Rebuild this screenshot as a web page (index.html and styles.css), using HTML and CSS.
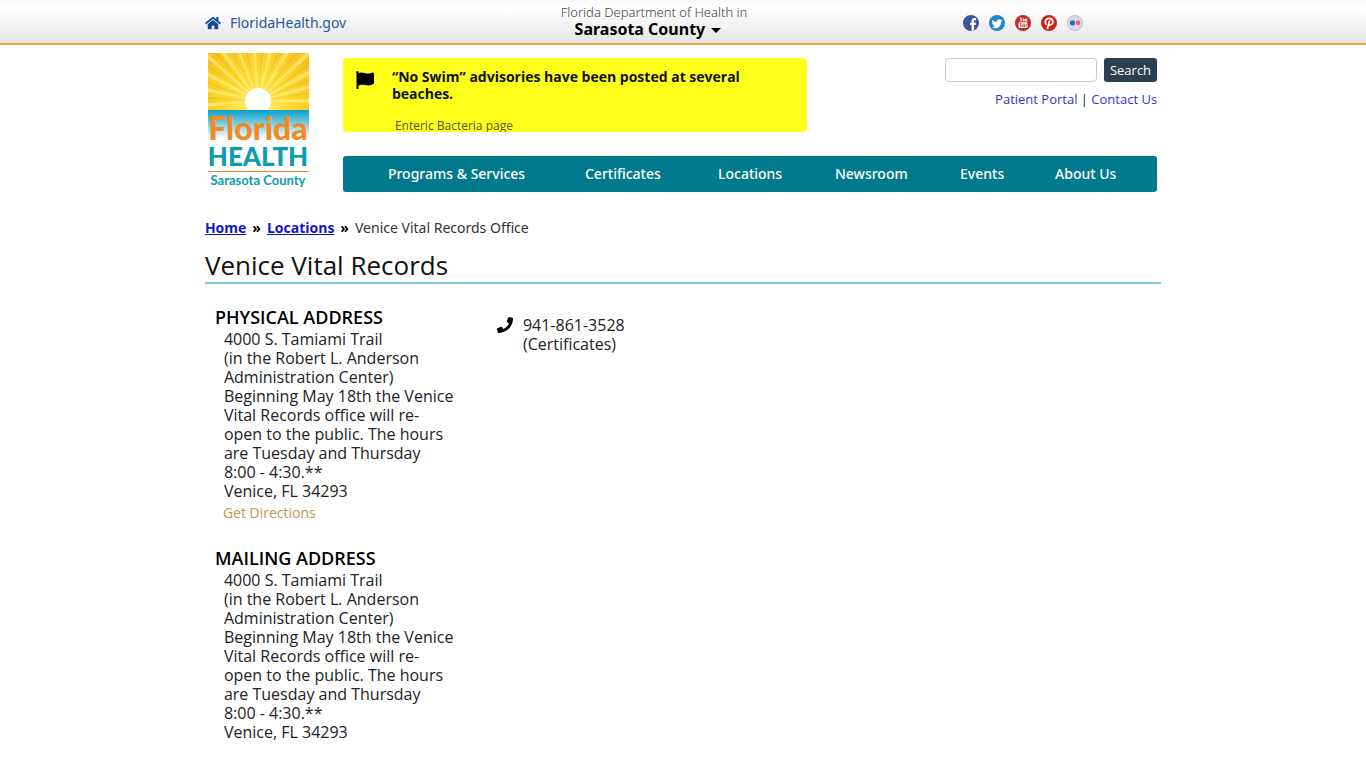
FILE: index.html
```
<!DOCTYPE html>
<html lang="en">
<head>
	<meta charset="UTF-8">
	<meta name="viewport" content="width=device-width, initial-scale=1">
	<title>Venice Vital Records Office | Florida Department of Health in Sarasota County</title>
	<link rel="stylesheet" href="styles.css">
</head>
<body>
	<div id="topbar">
		<div class="wrap topbar-in">
			<a class="home" href="#">
				<svg width="16" height="14" viewBox="0 0 576 512"><path fill="#164a91" d="M280 148L96 300v164a16 16 0 0 0 16 16h112a16 16 0 0 0 16-16v-96a16 16 0 0 1 16-16h64a16 16 0 0 1 16 16v96a16 16 0 0 0 16 16h112a16 16 0 0 0 16-16V300L296 148a12 12 0 0 0-16 0zM572 251l-84-69V44a12 12 0 0 0-12-12h-56a12 12 0 0 0-12 12v72l-90-74a48 48 0 0 0-61 0L4 251a12 12 0 0 0-1 17l25 31a12 12 0 0 0 17 2L280 107a12 12 0 0 1 16 0l235 194a12 12 0 0 0 17-2l25-31a12 12 0 0 0-1-17z"/></svg>
				<span>FloridaHealth.gov</span>
			</a>
			<a class="county" href="#">
				<span class="dept">Florida Department of Health in</span>
				<strong>Sarasota County <i class="caret"></i></strong>
			</a>
			<div class="social">
				<a href="#" aria-label="Facebook">
					<svg width="16" height="16" viewBox="0 0 16 16"><circle cx="8" cy="8" r="8" fill="#3c55a0"/><path fill="#fff" d="M8.600 16V10H7V7.700h1.600V6.200c0-2.100 1-3.100 3-3.100h1.500v2.200H12c-.8 0-1 .4-1 1.100v1.300h2.100l-.3 2.300H11v5.500z"/></svg>
				</a>
				<a href="#" aria-label="Twitter">
					<svg width="16" height="16" viewBox="0 0 16 16"><circle cx="8" cy="8" r="8" fill="#2284cc"/><path fill="#fff" d="M13.500 5.200l-1.200.4c.4-.3.700-.6.9-1.100l-1.400.5a2.300 2.300 0 0 0-3.900 2C6 6.900 4.400 6 3.300 4.700c-.7 1.100-.3 2.400.7 3.100l-1-.3c0 1.100.8 2 1.800 2.300h-1c.3.900 1.100 1.500 2.100 1.600-1 .7-2 1-3.300.9 4.500 2.600 9.800-.3 9.700-5.900z"/></svg>
				</a>
				<a href="#" aria-label="YouTube">
					<svg width="16" height="16" viewBox="0 0 16 16"><circle cx="8" cy="8" r="8" fill="#c5281c"/><path stroke="#fff" fill="none" d="M5 2.500l1.100 2v2M7.200 2.500l-1.100 2M8.200 4h.9v2h-.9zM10.500 3.500v2.700h1.200V3.500"/><rect x="3.500" y="7.300" width="9" height="5.700" rx="1.300" fill="#fff"/><path stroke="#c5281c" stroke-width=".7" fill="none" d="M4.500 8.500h2M5.500 8.500v3.300M7 9.500v2h1v-2M9 8.200v3.300h1V9.800H9M12 10.700h-1V9.800h1"/></svg>
				</a>
				<a href="#" aria-label="Pinterest">
					<svg width="16" height="16" viewBox="0 0 16 16"><circle cx="8" cy="8" r="8" fill="#c92619"/><path fill="none" stroke="#fff" stroke-width="1.700" stroke-linecap="round" d="M4.900 9C3.300 6.400 5 3.300 8.300 3.300c4.700 0 4.500 6.600 1 6.600-1 0-1.500-.5-1.600-1M8.500 6L6.500 13.300"/></svg>
				</a>
				<a href="#" aria-label="Flickr">
					<svg width="16" height="16" viewBox="0 0 16 16"><circle cx="8" cy="8" r="7.500" fill="#dcdcdc" stroke="#bdbdbd"/><circle cx="5.500" cy="7.800" r="2.600" fill="#1f6fd0"/><circle cx="11" cy="7.800" r="2.400" fill="#ee5a93"/></svg>
				</a>
			</div>
		</div>
	</div>

	<div id="header" class="wrap">
		<a class="logo" href="#" aria-label="Florida Health Sarasota County">
			<svg width="102" height="140" viewBox="0 0 102 140">
				<defs>
					<radialGradient id="sky" gradientUnits="userSpaceOnUse" cx="50" cy="48" r="62">
						<stop offset="0" stop-color="#fff27a"/>
						<stop offset=".5" stop-color="#fddb32"/>
						<stop offset="1" stop-color="#f8c31c"/>
					</radialGradient>
					<linearGradient id="sea" x1="0" y1="0" x2="0" y2="1">
						<stop offset="0" stop-color="#0aa0c6"/>
						<stop offset=".5" stop-color="#85cfe4"/>
						<stop offset="1" stop-color="#fff"/>
					</linearGradient>
				</defs>
				<rect width="101" height="58" fill="url(#sky)"/>
				<path fill="#fff08a" opacity=".6" d="M50 48L0 54v-4zM50 48L0 39v-4zM50 48L0 24v-5zM50 48L0 6V1zM50 48L13 0h5zM50 48L30 0h3zM50 48L45 0h3zM50 48L60 0h4zM50 48L76 0h5zM50 48L97 0h4v3zM50 48l51-31v5zM50 48l51-16v4zM50 48l51-2v4z"/>
				<path fill="#efa91c" opacity=".4" d="M50 48L0 46v-2zM50 48L0 31v-2zM50 48L0 14v-2zM50 48L6 0h3zM50 48L24 0h2zM50 48L38 0h2zM50 48L53 0h2zM50 48L69 0h2zM50 48L87 0h3zM50 48l51-38v3zM50 48l51-22v2zM50 48l51-9v2z"/>
				<circle cx="50" cy="48" r="13" fill="#fff"/>
				<rect y="57" width="101" height="29" fill="url(#sea)"/>
				<text class="logo-florida" x="50" y="87" text-anchor="middle">Florida</text>
				<text class="logo-health" x="50" y="113" text-anchor="middle">HEALTH</text>
				<path stroke="#f08a24" stroke-width="1" d="M0 118.500h101"/>
				<text class="logo-county" x="50" y="132" text-anchor="middle">Sarasota County</text>
			</svg>
		</a>
		<div class="header-main">
			<div class="header-top">
				<div class="notice">
					<svg width="20" height="20" viewBox="0 0 20 20"><path d="M2 1a1.500 1.500 0 0 1 1.500 2.200c4.500-2.200 7.500 1.800 12.700-.2 1-.5 2.300-.7 2.800.4v10.200c-5.500 4.400-10.500-.5-15.500 2V19h-2V3.200A1.300 1.300 0 0 1 2 1z"/></svg>
					<div class="notice-text">
						<strong>“No Swim” advisories have been posted at several beaches.</strong>
						<p>Enteric Bacteria page</p>
					</div>
				</div>
				<div class="tools">
					<form class="search" action="#">
						<input type="text" aria-label="Search">
						<button type="submit">Search</button>
					</form>
					<div class="links"><a href="#">Patient Portal</a> | <a href="#">Contact Us</a></div>
				</div>
			</div>
			<nav>
				<a href="#">Programs &amp; Services</a>
				<a href="#">Certificates</a>
				<a href="#">Locations</a>
				<a href="#">Newsroom</a>
				<a href="#">Events</a>
				<a href="#">About Us</a>
			</nav>
		</div>
	</div>

	<div id="content" class="wrap">
		<div class="crumbs">
			<a href="#">Home</a>
			<b>»</b>
			<a href="#">Locations</a>
			<b>»</b>
			<span>Venice Vital Records Office</span>
		</div>
		<h1>Venice Vital Records</h1>
		<div class="cols">
			<div class="addresses">
				<h2>PHYSICAL ADDRESS</h2>
				<address>
					4000 S. Tamiami Trail<br>
					(in the Robert L. Anderson Administration Center)<br>
					Beginning May 18th the Venice Vital Records office will re-<br>open to the public. The hours are Tuesday and Thursday<br>
					8:00 - 4:30.**<br>
					Venice, FL 34293
				</address>
				<a class="directions" href="#">Get Directions</a>
				<h2>MAILING ADDRESS</h2>
				<address>
					4000 S. Tamiami Trail<br>
					(in the Robert L. Anderson Administration Center)<br>
					Beginning May 18th the Venice Vital Records office will re-<br>open to the public. The hours are Tuesday and Thursday<br>
					8:00 - 4:30.**<br>
					Venice, FL 34293
				</address>
			</div>
			<div class="phone">
				<svg width="16" height="16" viewBox="0 0 512 512"><path d="M493 25L389 1c-11-3-23 3-27 14l-48 112c-4 10-1 21 7 28l61 50c-36 76-99 140-177 177l-50-61c-7-8-18-11-28-7L15 362C4 367-2 378 1 389l24 104c3 11 12 19 24 19 256 0 463-207 463-464 0-11-8-21-19-23z"/></svg>
				<div>941-861-3528<br>(Certificates)</div>
			</div>
		</div>
	</div>
</body>
</html>
```
FILE: styles.css
```
*{
	margin: 0;
	padding: 0;
	box-sizing: border-box;
}
body{
	font-family: "Open Sans", "Noto Sans", sans-serif;
	font-size: 16px;
	line-height: 19px;
	color: #222;
	background-color: #fff;
}
svg{
	display: block;
	flex-shrink: 0;
}
.wrap{
	width: 70%;
	margin: 0 auto;
}

/* top bar */
#topbar{
	font-family: "Noto Sans", sans-serif;
	background: linear-gradient(#f9f9f9, #fff 20%, #e4e4e4);
	border-bottom: 2px solid #e5a53a;
}
.topbar-in{
	display: grid;
	grid-template-columns: 1fr auto 1fr;
	height: 43px;
	padding-right: 58px;
}
.home{
	display: flex;
	align-items: center;
	gap: 9px;
	padding-top: 2px;
	font-size: 14px;
	color: #2a5796;
	text-decoration: none;
}
.county{
	padding-top: 4px;
	text-align: center;
	line-height: 17px;
	color: #000;
	text-decoration: none;
}
.county span{
	display: block;
	font-size: 13px;
	font-weight: 300;
	color: #444;
}
.county strong{
	display: block;
	font-weight: 700;
	margin-right: 12px;
}
.caret{
	display: inline-block;
	margin-left: 2px;
	vertical-align: middle;
	border: 5px solid transparent;
	border-top-color: #000;
	border-bottom: 0;
}
.social{
	display: flex;
	justify-content: flex-end;
	align-items: center;
	gap: 10px;
	padding: 2px 20px 0 0;
}

/* header */
#header{
	display: flex;
	gap: 33px;
	padding: 8px 4px 0 3px;
}
.logo{
	flex-shrink: 0;
}
.logo text{
	font-family: Lato, sans-serif;
	font-weight: 900;
}
.logo-florida{
	font-size: 32px;
	fill: #f28a25;
}
.logo-health{
	font-size: 26px;
	fill: #0d9dae;
}
.logo .logo-county{
	font-size: 13px;
	font-weight: 700;
	fill: #0d9dae;
}
.header-main{
	flex: 1;
	padding-top: 5px;
}
.header-top{
	display: flex;
	justify-content: space-between;
	align-items: flex-start;
}
.notice{
	display: flex;
	gap: 17px;
	width: 57%;
	height: 74px;
	padding: 10px 40px 0 12px;
	background-color: #ffff1c;
	border-radius: 4px;
	overflow: hidden;
}
.notice svg{
	margin-top: 2px;
}
.notice strong{
	display: block;
	font-size: 14px;
	font-weight: 700;
	line-height: 17px;
	color: #111;
}
.notice p{
	margin: 14px 0 0 3px;
	font-size: 12px;
	color: #555520;
}
.tools{
	text-align: right;
}
.search{
	display: flex;
	gap: 7px;
}
.search input{
	width: 152px;
	height: 24px;
	padding: 0 6px;
	border: 1px solid #ccc;
	border-radius: 4px;
}
.search button{
	height: 24px;
	padding: 0 6px;
	font-family: inherit;
	font-size: 13px;
	color: #fff;
	background-color: #2c3e50;
	border: 0;
	border-radius: 3px;
}
.links{
	margin-top: 8px;
	font-size: 13px;
}
.links a{
	color: #3434c4;
	text-decoration: none;
}
nav{
	display: grid;
	grid-template-columns: 197fr 133fr 117fr 125fr 95fr 102fr;
	margin-top: 24px;
	padding-left: 45px;
	background-color: #007a8c;
	border-radius: 3px;
}
nav a{
	font-family: "Noto Sans", sans-serif;
	font-size: 14px;
	font-weight: 500;
	line-height: 36px;
	color: #fff;
	text-decoration: none;
	white-space: nowrap;
}

/* content */
#content{
	padding-top: 25px;
}
.crumbs{
	display: flex;
	gap: 6px;
	font-size: 14px;
}
.crumbs a{
	font-weight: 700;
	color: #1414c8;
}
.crumbs b{
	color: #000;
}
.crumbs span{
	font-family: "Noto Sans", sans-serif;
	color: #333;
}
h1{
	margin-top: 11px;
	font-size: 26px;
	font-weight: 400;
	line-height: 34px;
	color: #111;
	border-bottom: 2px solid #7cc8e0;
}
.cols{
	display: flex;
	gap: 40px;
	padding: 22px 0 0 10px;
}
.addresses{
	width: 242px;
}
h2{
	font-size: 18px;
	font-weight: 600;
	line-height: 23px;
	color: #000;
}
address{
	padding: 1px 0 0 9px;
	font-style: normal;
}
.directions{
	display: block;
	margin: 2px 0 25px 8px;
	font-size: 14px;
	color: #c49350;
	text-decoration: none;
}
.phone{
	display: flex;
	gap: 10px;
	padding-top: 10px;
}
.phone svg{
	margin-top: 1px;
}
```
